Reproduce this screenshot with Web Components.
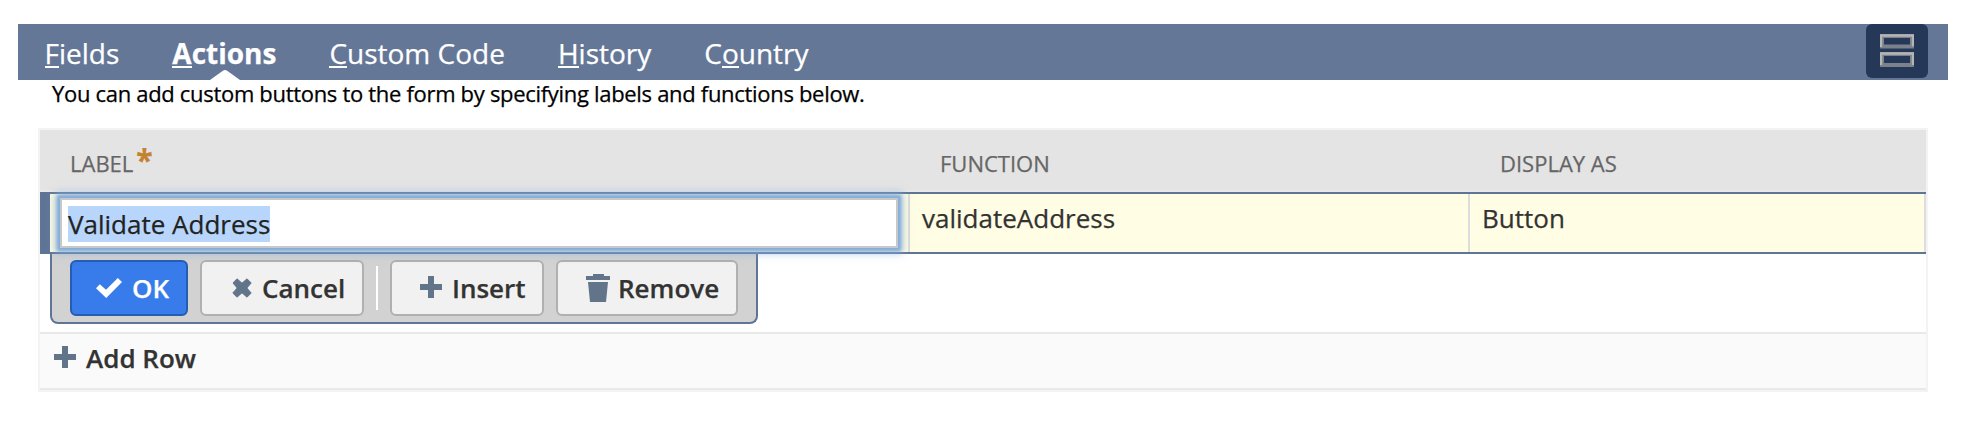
<!DOCTYPE html>
<html lang="en">
<head>
<meta charset="utf-8">
<title>Actions</title>
<style>
html,body{margin:0;background:#fff}
body{font-family:"Open Sans","Noto Sans",sans-serif;color:#333;width:1972px;height:444px;overflow:hidden;-webkit-text-stroke:.25px currentColor}
</style>
</head>
<body>
<actions-page></actions-page>
<script>
const define=(name,html,setup)=>customElements.define(name,class extends HTMLElement{
  constructor(){
    super();
    const t=document.createElement('template');
    t.innerHTML=html;
    this.attachShadow({mode:'open'}).append(t.content.cloneNode(true));
  }
  connectedCallback(){ if(setup) setup(this,this.shadowRoot); }
});

const icons={
  check:['26','20','<path fill="#fff" d="M0 10.2 3.8 6.2 10 11.8 21.8 0 26 4 10.2 20Z"/>'],
  cross:['20','20','<path fill="#62748a" d="M1 5 5 .8 10 5.2 15 .8 19.2 5 14.8 10 19.2 15 15 19.2 10 14.8 5 19.2 .8 15 5.2 10Z" stroke="#62748a" stroke-linejoin="round" stroke-width="1"/>'],
  plus:['22','22','<path fill="#62748a" d="M8 0h6v8h8v6h-8v8H8v-8H0V8h8Z"/>'],
  trash:['24','28','<path fill="#62748a" d="M7 0h11v2h6v4H0V2h7ZM2 8h20l-2 20H4Z"/>']
};
define('ui-icon','<style>:host{display:block;flex:none}svg{display:block}</style><span></span>',(el,r)=>{
  const [w,h,p]=icons[el.getAttribute('name')];
  r.querySelector('span').innerHTML=`<svg width="${w}" height="${h}" viewBox="0 0 ${w} ${h}">${p}</svg>`;
});

define('nav-tab',`<style>
:host{display:flex;position:relative;padding:0 27px 0 26px;height:56px;font-size:28px;line-height:58px;color:#fff;white-space:pre}
:host([active]){font-weight:700}
.caret{display:none;position:absolute;left:50%;bottom:0;margin-left:-15px}
:host([active]) .caret{display:block}
</style><span><slot></slot></span><svg class="caret" width="30" height="10"><path d="M0 10 12.5 1Q15-1 17.5 1L30 10Z" fill="#fff"/></svg>`);

define('nav-bar',`<style>
:host{display:flex;height:56px;background:#657797;padding:0 20px 0 .5px;justify-content:space-between}
nav{display:flex}
.fold{width:62px;height:54px;border-radius:6px;background:#263858;display:flex;justify-content:center;padding-top:10px;box-sizing:border-box}
</style><nav><slot></slot></nav><div class="fold"><svg width="34" height="34" fill="none"><g stroke="#7c828c" stroke-width="4"><path d="M2 2h30v10.5H2zM2 20h30v11H2z"/></g><path d="M1 13V1.5h32v10.7M1 31V19.5h32V31" stroke="#b5b5b5" stroke-width="2.4"/></svg></div>`);

define('ui-button',`<style>
:host{display:flex;align-items:center;box-sizing:border-box;height:56px;border:2px solid #b0b0b0;border-radius:6px;background:#f1f1f1;color:#333;font-size:26px;font-weight:600;line-height:52px;white-space:nowrap}
:host([primary]){background:#387bea;border-color:#275cb3;color:#fff}
</style><slot name="icon"></slot><span><slot></slot></span>`);

define('row-toolbar',`<style>
:host{display:flex;box-sizing:border-box;width:708px;height:70px;margin-left:10px;padding:6px 0 0 18px;border:2px solid #5f7596;border-top:0;border-radius:0 0 8px 8px;background:#d2d2d2}
.sep{width:2px;height:44px;background:#fff;margin:6px 12px 0}
</style>
<ui-button primary style="width:118px;margin-right:12px"><ui-icon slot="icon" name="check" style="margin:0 10px 0 24px"></ui-icon>OK</ui-button>
<ui-button style="width:164px"><ui-icon slot="icon" name="cross" style="margin:0 10px 0 30px"></ui-icon>Cancel</ui-button>
<div class="sep"></div>
<ui-button style="width:154px;margin-right:12px"><ui-icon slot="icon" name="plus" style="margin:-2px 10px 0 28px"></ui-icon>Insert</ui-button>
<ui-button style="width:182px"><ui-icon slot="icon" name="trash" style="margin:0 8px 0 28px"></ui-icon>Remove</ui-button>`);

define('text-field',`<style>
:host{display:block;box-sizing:border-box;width:838px;height:50px;margin:4px 0 0 10px;border:2px solid #c8c8c8;background:#fff;padding:6px;box-shadow:0 0 3px 3px #84addb,0 0 8px 5px #84addbb0;font-size:26px;line-height:36px;color:#222;position:relative}
span{display:inline-block;height:36px;background:#b8d6fb;white-space:nowrap}
</style><span><slot></slot></span>`);

define('data-table',`<style>
:host{display:block;box-sizing:border-box;width:1890px;height:264px;margin:24px 0 0 38px;border:2px solid #f3f3f3}
.grid{display:grid;grid-template-columns:870px 560px 456px}
.head{height:60px;background:#e4e4e4;border-bottom:2px solid #e9e9e9;font-size:22px;line-height:66px;color:#666}
.head>div{padding-left:30px;white-space:nowrap;display:flex;height:60px}
.star{color:#c3832e;font-weight:700;font-size:30px;line-height:60px;margin-left:3px}
.row{box-sizing:border-box;height:62px;border:solid #5f7596;border-width:2px 0;background:linear-gradient(90deg,#5f7596 10px,#fffde3 10px);font-size:26px;line-height:48px}
.cell{border-right:2px solid #ddd;height:58px;box-sizing:border-box}
.t{padding-left:12px}
.first{padding-left:10px}
.add{display:flex;align-items:flex-start;box-sizing:border-box;height:58px;margin-top:8px;border:solid #e9e9e9;border-width:2px 0;background:#fafafa;padding:12px 0 0 14px;font-size:26px;font-weight:600;line-height:24px}
.add span{margin-left:10px}
</style>
<div class="grid head"><div>LABEL<span class="star">*</span></div><div>FUNCTION</div><div>DISPLAY AS</div></div>
<div class="grid row"><div class="cell first"><text-field>Validate Address</text-field></div><div class="cell t">validateAddress</div><div class="cell t">Button</div></div>
<row-toolbar></row-toolbar>
<div class="add"><ui-icon name="plus"></ui-icon><span>Add Row</span></div>`);

define('actions-page',`<style>
:host{display:block;padding:24px 0 0}
nav-bar{margin:0 24px 0 18px}
p{margin:0 0 0 52px;height:24px;font-size:22px;line-height:26px;letter-spacing:-.31px;color:#000;white-space:nowrap}
u{text-decoration:none;background:linear-gradient(#fff,#fff) 0 calc(100% - 4px)/100% 2px no-repeat}
</style>
<nav-bar><nav-tab><u>F</u>ields</nav-tab><nav-tab active><u>A</u>ctions</nav-tab><nav-tab><u>C</u>ustom Code</nav-tab><nav-tab><u>H</u>istory</nav-tab><nav-tab>C<u>o</u>untry</nav-tab></nav-bar>
<p>You can add custom buttons to the form by specifying labels and functions below.</p>
<data-table></data-table>`);
</script>
</body>
</html>
